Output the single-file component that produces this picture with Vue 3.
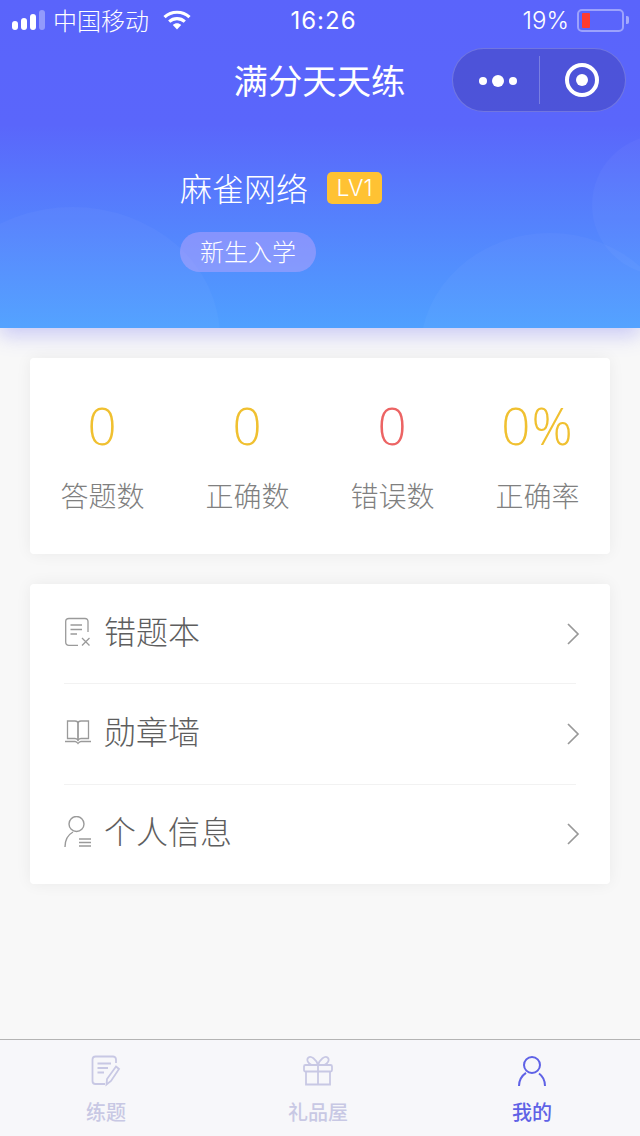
<script setup>
const stats = [
  { value: '0', label: '答题数', tone: 'gold' },
  { value: '0', label: '正确数', tone: 'gold' },
  { value: '0', label: '错误数', tone: 'red' },
  { value: '0%', label: '正确率', tone: 'gold' }
]
</script>

<template>
  <div class="page">
    <header class="hero">
      <div class="bubbles">
        <span class="bubble bubble-left"></span>
        <span class="bubble bubble-right"></span>
        <span class="bubble bubble-edge"></span>
      </div>

      <div class="status">
        <div class="status-left">
          <span class="signal"><i class="b1"></i><i class="b2"></i><i class="b3"></i><i class="b4"></i></span>
          <span class="carrier">中国移动</span>
          <svg class="wifi" width="28" height="20" viewBox="0 0 28 20">
            <path d="M1.500 7.200C8.500 .6 19.500 .6 26.500 7.200" fill="none" stroke="#fff" stroke-width="3.200"/>
            <path d="M6.200 11.600C10.600 7.600 17.400 7.600 21.800 11.600" fill="none" stroke="#fff" stroke-width="3.200"/>
            <path d="M9.800 15 14 19.500 18.200 15C15.800 12.800 12.200 12.800 9.800 15Z" fill="#fff"/>
          </svg>
        </div>
        <span class="clock">16:26</span>
        <div class="status-right">
          <span class="percent">19%</span>
          <span class="battery"><i></i></span>
          <span class="battery-cap"></span>
        </div>
      </div>

      <div class="nav">
        <h1 class="title">满分天天练</h1>
        <div class="capsule">
          <span class="dots"><i></i><i class="big"></i><i></i></span>
          <span class="sep"></span>
          <span class="target"><i></i></span>
        </div>
      </div>

      <div class="profile">
        <div class="name-row">
          <span class="name">麻雀网络</span>
          <span class="level">LV1</span>
        </div>
        <span class="rank">新生入学</span>
      </div>
    </header>

    <main class="content">
      <section class="card stats">
        <div v-for="s in stats" :key="s.label" class="stat">
          <span class="num" :class="s.tone">{{ s.value }}</span>
          <span class="lab">{{ s.label }}</span>
        </div>
      </section>

      <section class="card menu">
        <div class="row">
          <svg class="ico" width="28" height="30" viewBox="0 0 28 30" fill="none" stroke="#9a9a9a" stroke-width="1.300">
            <path d="M24 15V4.500C24 2.500 22.800 1.500 21 1.500H5C3 1.500 1.700 2.500 1.700 4.500V25C1.700 27 3 28.300 5 28.300H14"/>
            <path d="M6.500 8H18M6.500 12.500H18M6.500 17H13"/>
            <path d="M18 21 25.500 28.500M25.500 21 18 28.500"/>
          </svg>
          <span class="row-text">错题本</span>
          <svg class="chev" width="14" height="24" viewBox="0 0 14 24" fill="none" stroke="#999" stroke-width="1.700"><path d="M2 2 12 12 2 22"/></svg>
        </div>
        <div class="row">
          <svg class="ico" width="28" height="30" viewBox="0 0 28 30" fill="none" stroke="#9a9a9a" stroke-width="1.300">
            <path d="M3.500 4H11C12.500 4 14 5 14 6.500V23C13 22 12 21.500 11 21.500H3.500Z"/>
            <path d="M24.500 4H17C15.500 4 14 5 14 6.500V23C15 22 16 21.500 17 21.500H24.500Z"/>
            <path d="M1 24.500H11C12.500 24.500 13 25.500 14 26.500 15 25.500 15.500 24.500 17 24.500H27"/>
          </svg>
          <span class="row-text">勋章墙</span>
          <svg class="chev" width="14" height="24" viewBox="0 0 14 24" fill="none" stroke="#999" stroke-width="1.700"><path d="M2 2 12 12 2 22"/></svg>
        </div>
        <div class="row">
          <svg class="ico" width="28" height="32" viewBox="0 0 28 32" fill="none" stroke="#9a9a9a" stroke-width="1.400">
            <circle cx="12.500" cy="8" r="7.500"/>
            <path d="M1 31C1 24 4.500 18.500 9 16"/>
            <path d="M15 23H27M15 26.500H27M15 30H27"/>
          </svg>
          <span class="row-text">个人信息</span>
          <svg class="chev" width="14" height="24" viewBox="0 0 14 24" fill="none" stroke="#999" stroke-width="1.700"><path d="M2 2 12 12 2 22"/></svg>
        </div>
      </section>
    </main>

    <nav class="tabbar">
      <div class="tab">
        <svg width="30" height="32" viewBox="0 0 30 32" fill="none" stroke="#c8c8e4" stroke-width="1.800">
          <path d="M25 8V4.500C25 2.500 23.500 1.500 22 1.500H4.500C2.500 1.500 1.500 2.500 1.500 4.500V26C1.500 28 2.500 29 4.500 29H14"/>
          <path d="M6.500 8.500H20M6.500 13H17M6.500 17.500H13"/>
          <path d="M25 11.500 28 14 20 26 15.500 29.500 16 24Z"/>
        </svg>
        <span class="tab-label">练题</span>
      </div>
      <div class="tab">
        <svg width="30" height="32" viewBox="0 0 30 32" fill="none" stroke="#c8c8e4" stroke-width="1.800">
          <path d="M15 10C13 4 8 .5 5.500 2.500 3 4.500 5 9 9 10M15 10C17 4 22 .5 24.500 2.500 27 4.500 25 9 21 10"/>
          <rect x="1" y="10" width="28" height="6.500" rx="1.500"/>
          <path d="M3 16.500V29.500H27V16.500M15 10V29.500"/>
        </svg>
        <span class="tab-label">礼品屋</span>
      </div>
      <div class="tab active">
        <svg width="30" height="32" viewBox="0 0 30 32" fill="none" stroke="#5f62e6" stroke-width="2">
          <circle cx="15" cy="10" r="8"/>
          <path d="M2 31C2 25 5 20.500 9 17.800M28 31C28 25.500 25.500 21 22 18.500"/>
        </svg>
        <span class="tab-label">我的</span>
      </div>
    </nav>
  </div>
</template>

<style scoped>
.page {
  width: 640px;
  height: 1136px;
  display: flex;
  flex-direction: column;
  overflow: hidden;
  background: #f8f8f8;
  font-family: "Noto Sans CJK SC", "Noto Sans", sans-serif;
}
.hero {
  position: relative;
  height: 328px;
  flex: none;
  color: #fff;
  background: linear-gradient(180deg, #5a64fb 0%, #5a66fb 38%, #4fa0ff 100%);
  box-shadow: 0 8px 18px rgba(90, 90, 240, .28);
  z-index: 1;
}
.bubbles {
  position: absolute;
  inset: 0;
  overflow: hidden;
}
.bubble {
  position: absolute;
  border-radius: 50%;
  background: rgba(255, 255, 255, .03);
}
.bubble-left { left: -75px; top: 207px; width: 295px; height: 260px; }
.bubble-right { left: 420px; top: 233px; width: 260px; height: 240px; }
.bubble-edge { left: 592px; top: 135px; width: 140px; height: 140px; }

.status {
  position: relative;
  height: 40px;
  display: flex;
  align-items: center;
  justify-content: space-between;
  padding: 0 11px 0 12px;
}
.status-left, .status-right { display: flex; align-items: center; }
.status-left { width: 203px; }
.status-right { width: 197px; justify-content: flex-end; }
.signal { display: flex; align-items: flex-end; gap: 3px; height: 20px; margin-right: 8px; }
.signal i { width: 6px; background: #fff; border-radius: 3px; display: block; }
.signal .b1 { height: 9px; }
.signal .b2 { height: 12px; }
.signal .b3 { height: 16px; }
.signal .b4 { height: 20px; background: rgba(255, 255, 255, .35); }
.carrier { font-size: 24px; line-height: 30px; font-weight: 300; }
.wifi { margin-left: 14px; }
.clock { font-family: Inter, "Liberation Sans", sans-serif; font-size: 24px; letter-spacing: 1px; }
.percent { font-family: Inter, "Liberation Sans", sans-serif; font-size: 24px; font-weight: 300; margin-right: 8px; }
.battery {
  width: 47px;
  height: 23px;
  box-sizing: border-box;
  border: 2px solid rgba(255, 255, 255, .4);
  border-radius: 5px;
  padding: 2px;
  display: flex;
}
.battery i { width: 8px; background: #ff3b30; border-radius: 1px; margin-left: 1px; }
.battery-cap { width: 3px; height: 8px; margin-left: 2px; background: rgba(255, 255, 255, .45); border-radius: 0 2px 2px 0; }

.nav {
  position: relative;
  height: 80px;
  display: flex;
  align-items: center;
  justify-content: center;
}
.title { margin: -3px 0 0 -1px; font-size: 34.400px; font-weight: 400; line-height: 80px; }
.capsule {
  position: absolute;
  left: 452px;
  top: 8px;
  width: 174px;
  height: 64px;
  box-sizing: border-box;
  display: flex;
  align-items: center;
  border: 1px solid rgba(255, 255, 255, .2);
  border-radius: 32px;
  background: rgba(60, 60, 170, .42);
}
.dots { width: 86px; display: flex; align-items: center; gap: 4.500px; padding: 2px 0 0 26px; box-sizing: border-box; }
.dots i { width: 8px; height: 8px; background: #fff; border-radius: 50%; }
.dots .big { width: 12.500px; height: 12.500px; }
.sep { width: 1px; height: 48px; background: rgba(255, 255, 255, .25); }
.target {
  margin-left: 25px;
  width: 34px;
  height: 34px;
  box-sizing: border-box;
  border: 4px solid #fff;
  border-radius: 50%;
  display: flex;
  align-items: center;
  justify-content: center;
}
.target i { width: 12px; height: 12px; border-radius: 50%; background: #fff; }

.profile {
  position: relative;
  margin: 0 0 0 180px;
  padding-top: 48px;
  display: flex;
  flex-direction: column;
  align-items: flex-start;
}
.name-row { display: flex; align-items: center; height: 40px; }
.name { font-size: 32px; line-height: 38px; font-weight: 300; margin-top: -2px; }
.level {
  margin-left: 19px;
  width: 55px;
  height: 32px;
  border-radius: 5px;
  background: #ffc233;
  font-family: Inter, "Liberation Sans", sans-serif;
  font-weight: 300;
  font-size: 23px;
  line-height: 32px;
  text-align: center;
}
.rank {
  margin-top: 24px;
  width: 136px;
  height: 40px;
  border-radius: 20px;
  background: rgba(209, 170, 253, .4);
  font-size: 24px;
  line-height: 38px;
  font-weight: 300;
  text-align: center;
}

.content {
  flex: 1;
  padding: 30px 30px 0;
  display: flex;
  flex-direction: column;
  gap: 30px;
}
.card {
  background: #fff;
  border-radius: 4px;
  box-shadow: 0 0 16px rgba(0, 0, 0, .06);
}
.stats {
  height: 196px;
  display: grid;
  grid-template-columns: repeat(4, 145px);
}
.stat { display: flex; flex-direction: column; align-items: center; }
.num {
  margin-top: 38px;
  font-family: "Open Sans", "Liberation Sans", sans-serif;
  font-weight: 300;
  font-size: 51px;
  letter-spacing: 1px;
  line-height: 58px;
}
.gold { color: #f0c030; }
.red { color: #ec6464; }
.lab {
  margin-top: 23px;
  font-size: 28px;
  line-height: 36px;
  font-weight: 300;
  color: #808080;
}
.menu { height: 300px; padding: 0 34px; display: flex; flex-direction: column; }
.row {
  flex: 1;
  display: flex;
  align-items: center;
  border-bottom: 1px solid #f2f2f2;
}
.row:last-child { border-bottom: 0; }
.ico { flex: none; margin: -4px 12px 0 0; }
.row-text { flex: 1; font-size: 32px; line-height: 40px; font-weight: 300; color: #5e5e5e; margin-top: -8px; }
.chev { flex: none; margin-right: -4px; }

.tabbar {
  flex: none;
  height: 97px;
  box-sizing: border-box;
  border-top: 1px solid #b4b4b4;
  background: #f7f7fa;
  display: grid;
  grid-template-columns: 212px 212px 216px;
}
.tab { display: flex; flex-direction: column; align-items: center; padding-top: 15px; }
.tab-label {
  margin-top: 12px;
  font-size: 20px;
  line-height: 26px;
  font-weight: 500;
  color: #c8c8e4;
}
.active .tab-label { color: #5f62e6; }
</style>
